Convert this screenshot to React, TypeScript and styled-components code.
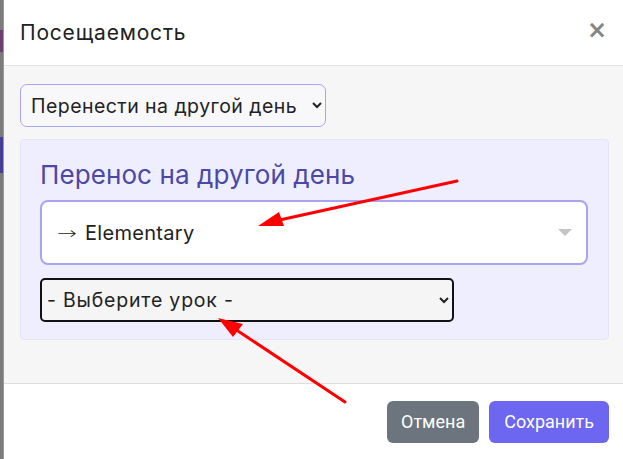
import React, { useState } from 'react';
import styled, { createGlobalStyle } from 'styled-components';

const GlobalStyle = createGlobalStyle`
    html, body {
        margin: 0;
        padding: 0;
        background: #7d7d7d;
    }
    * {
        box-sizing: border-box;
    }
`;

const Page = styled.div`
    width: 623px;
    height: 459px;
    display: flex;
    position: relative;
    overflow: hidden;
    font-family: 'Inter', 'Noto Sans', sans-serif;
`;

const Backdrop = styled.div`
    width: 3px;
    display: flex;
    flex-direction: column;
    background: #7b7b7b;
`;

const BackdropBlock = styled.div<{ $h: number; $color: string }>`
    height: ${props => props.$h}px;
    background: ${props => props.$color};
`;

const Modal = styled.div`
    flex: 1;
    display: flex;
    flex-direction: column;
    background: #fff;
    border-left: 1px solid #9a9a9a;
`;

const Header = styled.div`
    height: 66px;
    display: flex;
    align-items: center;
    justify-content: space-between;
    padding: 0 16px 0 16px;
    border-bottom: 1px solid #e2e2e2;
`;

const Title = styled.h5`
    margin: 0;
    font-size: 21px;
    font-weight: 400;
    letter-spacing: 0.8px;
    color: #222;
`;

const CloseButton = styled.button`
    border: none;
    background: none;
    padding: 0;
    color: #858585;
    font-size: 24px;
    font-weight: 700;
    line-height: 1;
    font-family: 'DejaVu Sans', sans-serif;
    margin-top: -6px;
`;

const Body = styled.div`
    flex: 1;
    background: #f6f6f6;
    padding: 18px 14px 0 16px;
    display: flex;
    flex-direction: column;
    gap: 12px;
`;

const ModeSelect = styled.select`
    align-self: flex-start;
    width: 306px;
    height: 43px;
    border: 1px solid #a9a4f2;
    border-radius: 7px;
    background: #f8f8fb;
    font-family: 'Inter', sans-serif;
    font-size: 19.5px;
    letter-spacing: 0.45px;
    color: #222;
    padding: 0 6px;
    outline: none;
`;

const Card = styled.div`
    background: #efeefe;
    border: 1px solid #e6e4fa;
    border-radius: 4px;
    padding: 19px 20px 18px 19px;
    height: 201px;
`;

const CardTitle = styled.h3`
    margin: 0 0 10px;
    font-size: 26px;
    font-weight: 400;
    letter-spacing: 0.1px;
    color: #4b48a6;
    line-height: 31px;
`;

const ComboBox = styled.div`
    height: 65px;
    background: #fff;
    border: 2px solid #a8a4f1;
    border-radius: 8px;
    display: flex;
    align-items: center;
    justify-content: space-between;
    padding: 0 14px 0 15px;
    font-size: 20px;
    letter-spacing: 0.3px;
    color: #222;
`;

const ComboValue = styled.span`
    display: flex;
    align-items: center;
`;

const ArrowGlyph = styled.span`
    display: inline-block;
    width: 28px;
    font-family: 'DejaVu Sans', sans-serif;
    font-weight: 300;
    font-size: 17px;
    transform: scaleX(1.4);
    transform-origin: left center;
`;

const Caret = styled.span`
    width: 0;
    height: 0;
    border-left: 7px solid transparent;
    border-right: 7px solid transparent;
    border-top: 7px solid #c4c4c4;
`;

const LessonSelect = styled.select`
    display: block;
    margin-top: 13px;
    width: 414px;
    height: 44px;
    border: 2px solid #111;
    border-radius: 5px;
    background: #f5f5f5;
    font-family: 'Inter', sans-serif;
    font-size: 19.5px;
    letter-spacing: 0.8px;
    color: #222;
    padding: 0 1px;
    outline: none;
`;

const Footer = styled.div`
    height: 76px;
    border-top: 1px solid #dedede;
    display: flex;
    align-items: center;
    justify-content: flex-end;
    gap: 10px;
    padding: 0 14px 0 0;
`;

const Button = styled.button<{ $variant: 'secondary' | 'primary' }>`
    height: 42px;
    border: none;
    border-radius: 6px;
    padding: 0 ${props => (props.$variant === 'primary' ? 15 : 14)}px;
    font-family: 'Roboto', 'Inter', sans-serif;
    font-size: 18px;
    color: #fff;
    background: ${props => (props.$variant === 'primary' ? '#6c66f1' : '#6c757d')};
`;

const Annotations = styled.svg`
    position: absolute;
    left: 0;
    top: 0;
    pointer-events: none;
`;

const App = () => {
    const [mode, setMode] = useState('move');
    const [lesson, setLesson] = useState('');

    return (
        <>
            <GlobalStyle />
            <Page>
                <Backdrop>
                    <BackdropBlock $h={30} $color="#7b7b7b" />
                    <BackdropBlock $h={22} $color="#6b3f6f" />
                    <BackdropBlock $h={85} $color="#7b7b7b" />
                    <BackdropBlock $h={36} $color="#443f95" />
                    <BackdropBlock $h={286} $color="#7b7b7b" />
                </Backdrop>
                <Modal>
                    <Header>
                        <Title>Посещаемость</Title>
                        <CloseButton type="button">×</CloseButton>
                    </Header>
                    <Body>
                        <ModeSelect value={mode} onChange={e => setMode(e.target.value)}>
                            <option value="move">Перенести на другой день</option>
                        </ModeSelect>
                        <Card>
                            <CardTitle>Перенос на другой день</CardTitle>
                            <ComboBox>
                                <ComboValue>
                                    <ArrowGlyph>→</ArrowGlyph>Elementary
                                </ComboValue>
                                <Caret />
                            </ComboBox>
                            <LessonSelect value={lesson} onChange={e => setLesson(e.target.value)}>
                                <option value="">- Выберите урок -</option>
                            </LessonSelect>
                        </Card>
                    </Body>
                    <Footer>
                        <Button type="button" $variant="secondary">Отмена</Button>
                        <Button type="button" $variant="primary">Сохранить</Button>
                    </Footer>
                </Modal>
                <Annotations width={623} height={459}>
                    <line x1={457} y1={181} x2={275} y2={221} stroke="#ff0000" strokeWidth={3} strokeLinecap="round" />
                    <polygon points="258,226 279,212 284,226" fill="#ff0000" />
                    <line x1={345} y1={402} x2={232} y2={327} stroke="#ff0000" strokeWidth={3} strokeLinecap="round" />
                    <polygon points="218,318 243,324 233,337" fill="#ff0000" />
                </Annotations>
            </Page>
        </>
    );
};

export default App;
